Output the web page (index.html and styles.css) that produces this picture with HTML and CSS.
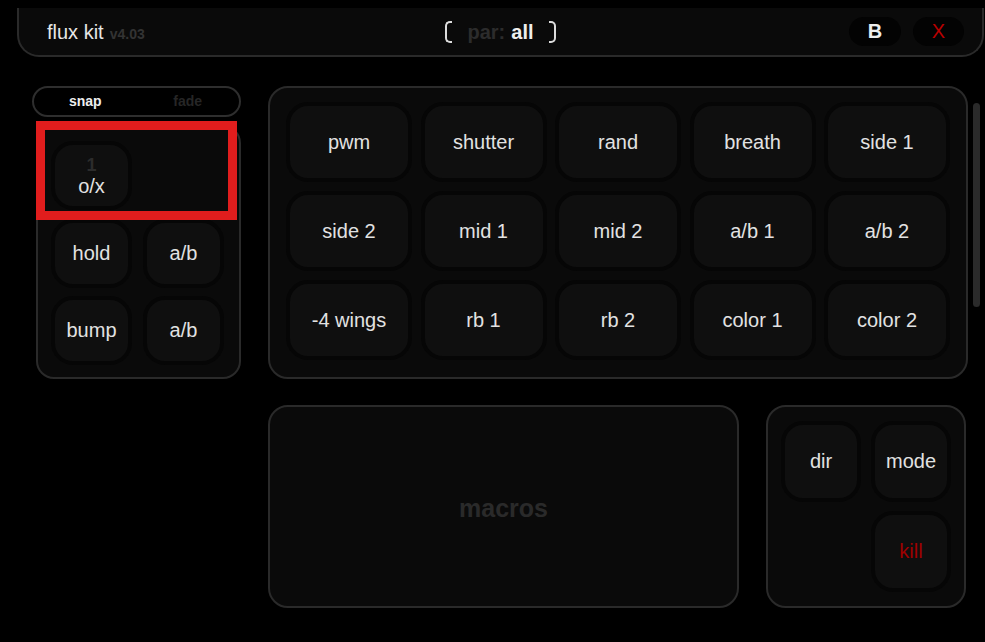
FILE: index.html
```html
<!DOCTYPE html>
<html>
<head>
<meta charset="utf-8">
<link rel="stylesheet" href="styles.css">
</head>
<body>
<header class="header">
  <div class="title">flux kit<span class="ver">v4.03</span></div>
  <div class="par">
    <span class="br br-l"></span>
    <span class="par-label">par:</span><span class="par-val">all</span>
    <span class="br br-r"></span>
  </div>
  <div class="hbtns">
    <span class="pill pill-b">B</span>
    <span class="pill pill-x">X</span>
  </div>
</header>
<main class="main">
  <div class="leftcol">
    <div class="toggle"><span class="on">snap</span><span class="off">fade</span></div>
    <div class="lpanel">
      <div class="btn btn-stack"><span class="num">1</span><span>o/x</span></div>
      <div class="spacer"></div>
      <div class="btn">hold</div>
      <div class="btn">a/b</div>
      <div class="btn">bump</div>
      <div class="btn">a/b</div>
      <div class="redbox"></div>
    </div>
  </div>
  <div class="mcol">
    <div class="gpanel">
      <div class="btn">pwm</div>
      <div class="btn">shutter</div>
      <div class="btn">rand</div>
      <div class="btn">breath</div>
      <div class="btn">side 1</div>
      <div class="btn">side 2</div>
      <div class="btn">mid 1</div>
      <div class="btn">mid 2</div>
      <div class="btn">a/b 1</div>
      <div class="btn">a/b 2</div>
      <div class="btn">-4 wings</div>
      <div class="btn">rb 1</div>
      <div class="btn">rb 2</div>
      <div class="btn">color 1</div>
      <div class="btn">color 2</div>
    </div>
    <div class="bottom">
      <div class="macros">macros</div>
      <div class="rpanel">
        <div class="btn">dir</div>
        <div class="btn">mode</div>
        <div class="spacer"></div>
        <div class="btn kill">kill</div>
      </div>
    </div>
  </div>
  <div class="scroll"></div>
</main>
</body>
</html>
```
FILE: styles.css
```css
html, body {
  margin: 0;
  padding: 0;
  background: #000;
}
body {
  width: 985px;
  height: 642px;
  overflow: hidden;
  font-family: "Liberation Sans", Arial, sans-serif;
  color: #e2e2e2;
}
.header {
  box-sizing: border-box;
  margin: 8px 1px 0 17px;
  height: 49px;
  border: 2px solid #2a2a2a;
  border-top: none;
  border-radius: 0 0 22px 22px;
  background: #0a0a0a;
  display: grid;
  grid-template-columns: 1fr auto 1fr;
  align-items: center;
  padding: 0 18px;
}
.title {
  font-size: 20px;
  color: #e6e6e6;
  padding-left: 10px;
  padding-top: 1px;
}
.ver {
  font-size: 14px;
  font-weight: bold;
  color: #333;
  margin-left: 6px;
}
.par {
  display: flex;
  align-items: center;
  font-size: 20px;
  font-weight: bold;
  padding-top: 1px;
}
.br {
  display: block;
  box-sizing: border-box;
  width: 7px;
  height: 22px;
  border: 2px solid #dcdcdc;
}
.br-l {
  border-right: none;
  border-radius: 5px 0 0 5px;
  margin-right: 15px;
}
.br-r {
  border-left: none;
  border-radius: 0 5px 5px 0;
  margin-left: 15px;
}
.par-label {
  color: #2c2c2c;
  margin-right: 6px;
}
.par-val {
  color: #eee;
}
.hbtns {
  justify-self: end;
  display: flex;
  gap: 12px;
}
.pill {
  width: 52px;
  height: 29px;
  border-radius: 15px;
  background: #030303;
  display: flex;
  align-items: center;
  justify-content: center;
  font-size: 20px;
}
.pill-b {
  font-weight: bold;
  color: #eee;
}
.pill-x {
  color: #b80000;
  width: 51px;
}
.main {
  display: flex;
  align-items: flex-start;
  padding: 29px 0 0 32px;
}
.leftcol {
  width: 209px;
  display: flex;
  flex-direction: column;
}
.toggle {
  box-sizing: border-box;
  height: 31px;
  border: 2px solid #2e2e2e;
  border-radius: 16px;
  display: flex;
}
.toggle span {
  flex: 1;
  text-align: center;
  line-height: 27px;
  font-size: 14px;
  font-weight: bold;
}
.toggle .on { color: #eee; }
.toggle .off { color: #262626; }
.lpanel {
  position: relative;
  box-sizing: border-box;
  margin: 8px 0 0 4px;
  width: 205px;
  height: 254px;
  border: 2px solid #2a2a2a;
  border-radius: 18px;
  background: #0a0a0a;
  padding: 14px 13px;
  display: grid;
  grid-template-columns: 81px 81px;
  grid-auto-rows: 69px;
  column-gap: 11px;
  row-gap: 8.7px;
}
.btn {
  box-sizing: border-box;
  border: 4px solid #060606;
  border-radius: 22px;
  background: #0f0f0f;
  color: #e2e2e2;
  font-size: 20px;
  display: flex;
  align-items: center;
  justify-content: center;
}
.btn-stack {
  flex-direction: column;
}
.btn-stack .num {
  font-size: 18px;
  font-weight: bold;
  color: #2c2c2c;
  line-height: 20px;
}
.btn-stack span:last-child {
  line-height: 22px;
}
.redbox {
  position: absolute;
  left: -2px;
  top: -6px;
  width: 201px;
  height: 99px;
  box-sizing: border-box;
  border: 9px solid #e11d1d;
}
.mcol {
  margin-left: 27px;
  width: 700px;
}
.gpanel {
  box-sizing: border-box;
  height: 293px;
  border: 2px solid #2a2a2a;
  border-radius: 20px;
  background: #0a0a0a;
  padding: 14px 16px 0;
  display: grid;
  grid-template-columns: repeat(5, 126px);
  grid-auto-rows: 80px;
  column-gap: 8.5px;
  row-gap: 9px;
}
.bottom {
  display: flex;
  gap: 27px;
  margin-top: 26px;
}
.macros {
  box-sizing: border-box;
  width: 471px;
  height: 203px;
  border: 2px solid #2a2a2a;
  border-radius: 20px;
  background: #0a0a0a;
  display: flex;
  align-items: center;
  justify-content: center;
  padding-top: 3px;
  font-size: 25px;
  font-weight: bold;
  color: #2a2a2a;
}
.rpanel {
  box-sizing: border-box;
  width: 200px;
  height: 203px;
  border: 2px solid #2a2a2a;
  border-radius: 20px;
  background: #0a0a0a;
  padding: 14px 13px;
  display: grid;
  grid-template-columns: 80px 80px;
  grid-auto-rows: 81px;
  column-gap: 10px;
  row-gap: 9px;
}
.kill {
  color: #a00000;
}
.scroll {
  margin: 17px 0 0 5px;
  width: 7px;
  height: 204px;
  border-radius: 4px;
  background: #2a2a2a;
}
```
